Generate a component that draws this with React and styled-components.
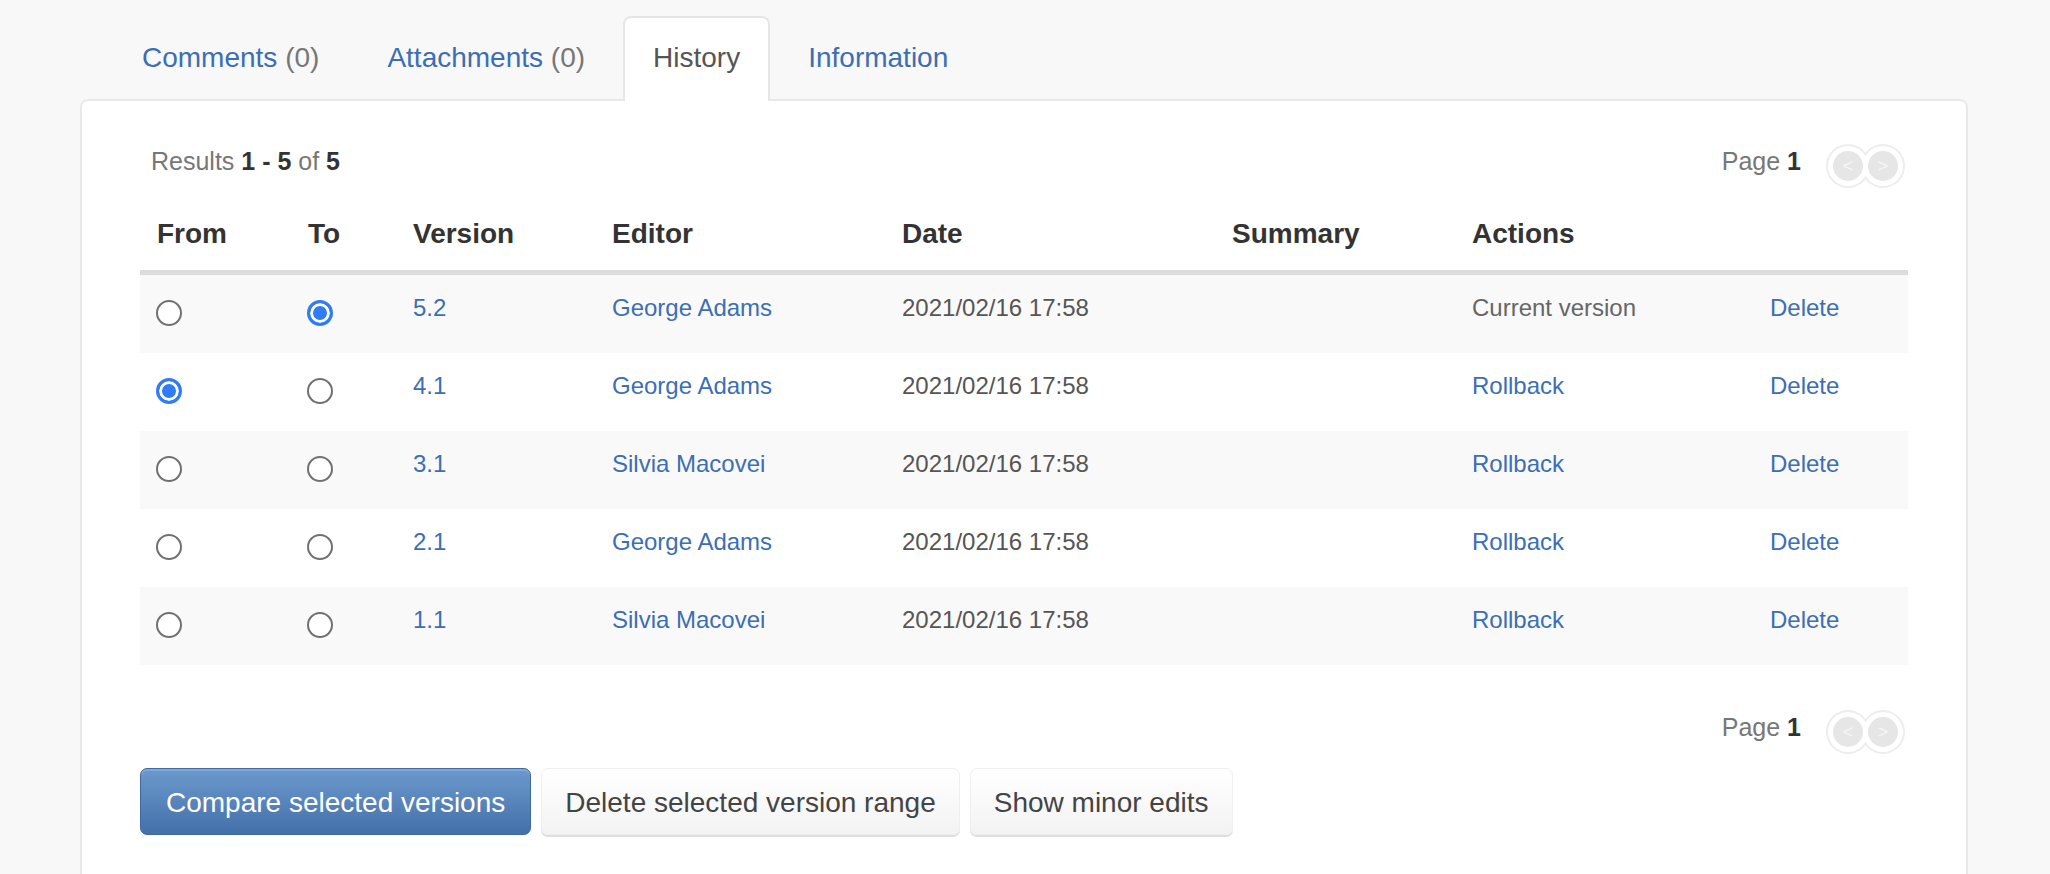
import { useState } from 'react';
import styled, { createGlobalStyle } from 'styled-components';

const GlobalStyle = createGlobalStyle`
  body {
    margin: 0;
    background: #f8f8f8;
    font-family: "Liberation Sans", Arial, sans-serif;
    color: #333;
  }
`;

const Page = styled.div`
  padding: 16px 82px 0 80px;
`;

const TabList = styled.div`
  display: flex;
  gap: 8px;
  padding-left: 32px;
  margin-bottom: -2px;
  position: relative;
  z-index: 1;
`;

const Tab = styled.a`
  display: block;
  padding: 20px 28px 23px;
  border: 2px solid transparent;
  border-bottom: none;
  border-radius: 8px 8px 0 0;
  font-size: 28px;
  line-height: 40px;
  text-decoration: none;
  cursor: pointer;
  color: ${({ active }) => (active ? '#555' : '#3c6eb4')};
  background: ${({ active }) => (active ? '#fff' : 'transparent')};
  border-color: ${({ active }) => (active ? '#e6e6e6' : 'transparent')};
`;

const Count = styled.span`
  color: #777;
`;

const Panel = styled.div`
  background: #fff;
  border: 2px solid #e9e9e9;
  border-bottom: none;
  border-radius: 8px 8px 0 0;
  padding: 42px 58px 60px;
`;

const ResultsBar = styled.div`
  display: flex;
  justify-content: space-between;
  align-items: flex-start;
  padding: 0 10px 0 11px;
  font-size: 25px;
  line-height: 36px;
  color: #777;

  b {
    color: #333;
  }
`;

const PageInfo = styled.div`
  display: flex;
  align-items: flex-start;
`;

const Pager = styled.div`
  display: flex;
  gap: 5px;
  margin: 8px 0 0 32px;
  position: relative;
  z-index: 0;
`;

const PagerButton = styled.button`
  position: relative;
  width: 30px;
  height: 30px;
  padding: 0;
  border: none;
  border-radius: 50%;
  background: #e6e6e6;
  color: #f7f7f7;
  font: 18px/30px "Liberation Sans", Arial, sans-serif;

  &::before,
  &::after {
    content: '';
    position: absolute;
    border-radius: 50%;
  }

  &::before {
    inset: -7px;
    background: #ededed;
    z-index: -2;
  }

  &::after {
    inset: -5px;
    background: #fff;
    z-index: -1;
  }
`;

const Table = styled.table`
  width: 100%;
  margin-top: 17px;
  border-collapse: separate;
  border-spacing: 0;
  table-layout: fixed;
`;

const Th = styled.th`
  padding: 16px 17px;
  border-bottom: 5px solid #dcdcdc;
  font-size: 28px;
  line-height: 40px;
  font-weight: bold;
  text-align: left;
  color: #333;
`;

const Row = styled.tr`
  background: ${({ striped }) => (striped ? '#f9f9f9' : '#fff')};

  & + & td {
    border-top: 2px solid #dddddd;
  }
`;

const Td = styled.td`
  padding: 16px 17px 27px;
  vertical-align: top;
  font-size: 24px;
  line-height: 34px;
  color: ${({ muted }) => (muted ? '#666' : '#555')};
`;

const Radio = styled.input`
  appearance: none;
  display: block;
  width: 26px;
  height: 26px;
  margin: 9px 0 0 -1px;
  border: 2px solid #707070;
  border-radius: 50%;
  background: #fff;
  cursor: pointer;

  &:checked {
    border: 3px solid #2f7cf6;
    background: #2f7cf6;
    box-shadow: inset 0 0 0 3px #fff;
  }
`;

const Link = styled.a`
  color: #3c6eb4;
  text-decoration: none;
  cursor: pointer;
`;

const BottomBar = styled(ResultsBar)`
  justify-content: flex-end;
  margin-top: 44px;
`;

const Buttons = styled.div`
  display: flex;
  gap: 10px;
  margin-top: 21px;
`;

const Button = styled.button`
  padding: 14px ${({ primary }) => (primary ? 25 : 23)}px 11px;
  border: 1px solid ${({ primary }) => (primary ? '#3e69a3' : '#efefef')};
  border-radius: 7px;
  font-family: "Liberation Sans", Arial, sans-serif;
  font-size: 28px;
  line-height: 40px;
  cursor: pointer;
  color: ${({ primary }) => (primary ? '#fff' : '#444')};
  background: ${({ primary }) => (primary
    ? 'linear-gradient(#6c99cc, #4470aa)'
    : 'linear-gradient(#fff, #f3f3f3)')};
  box-shadow: ${({ primary }) => (primary
    ? 'inset 0 2px 0 rgba(255,255,255,0.15)'
    : '0 2px 0 #dedede')};
`;

const columns = [
  { label: 'From', width: 151 },
  { label: 'To', width: 105 },
  { label: 'Version', width: 199 },
  { label: 'Editor', width: 290 },
  { label: 'Date', width: 330 },
  { label: 'Summary', width: 240 },
  { label: 'Actions', width: 298 },
  { label: '', width: 155 },
];

const versions = [
  { version: '5.2', editor: 'George Adams', current: true },
  { version: '4.1', editor: 'George Adams' },
  { version: '3.1', editor: 'Silvia Macovei' },
  { version: '2.1', editor: 'George Adams' },
  { version: '1.1', editor: 'Silvia Macovei' },
];

const tabs = [
  { label: 'Comments', count: 0 },
  { label: 'Attachments', count: 0 },
  { label: 'History' },
  { label: 'Information' },
];

function PageNav() {
  return (
    <PageInfo>
      <span>
        Page <b>1</b>
      </span>
      <Pager>
        <PagerButton type="button">&lt;</PagerButton>
        <PagerButton type="button">&gt;</PagerButton>
      </Pager>
    </PageInfo>
  );
}

export default function App() {
  const [activeTab, setActiveTab] = useState('History');
  const [from, setFrom] = useState('4.1');
  const [to, setTo] = useState('5.2');

  return (
    <Page>
      <GlobalStyle />
      <TabList>
        {tabs.map((tab) => (
          <Tab
            key={tab.label}
            active={activeTab === tab.label}
            onClick={() => setActiveTab(tab.label)}
          >
            {tab.label}
            {tab.count !== undefined && (
              <Count> ({tab.count})</Count>
            )}
          </Tab>
        ))}
      </TabList>
      <Panel>
        <ResultsBar>
          <span>
            Results <b>1 - 5</b> of <b>5</b>
          </span>
          <PageNav />
        </ResultsBar>
        <Table>
          <colgroup>
            {columns.map((col, i) => (
              <col key={i} style={{ width: col.width }} />
            ))}
          </colgroup>
          <thead>
            <tr>
              {columns.map((col, i) => (
                <Th key={i}>{col.label}</Th>
              ))}
            </tr>
          </thead>
          <tbody>
            {versions.map((item, index) => (
              <Row key={item.version} striped={index % 2 === 0}>
                <Td>
                  <Radio
                    type="radio"
                    name="from"
                    checked={from === item.version}
                    onChange={() => setFrom(item.version)}
                  />
                </Td>
                <Td>
                  <Radio
                    type="radio"
                    name="to"
                    checked={to === item.version}
                    onChange={() => setTo(item.version)}
                  />
                </Td>
                <Td><Link>{item.version}</Link></Td>
                <Td><Link>{item.editor}</Link></Td>
                <Td>2021/02/16 17:58</Td>
                <Td />
                <Td muted>
                  {item.current ? 'Current version' : <Link>Rollback</Link>}
                </Td>
                <Td><Link>Delete</Link></Td>
              </Row>
            ))}
          </tbody>
        </Table>
        <BottomBar>
          <PageNav />
        </BottomBar>
        <Buttons>
          <Button type="button" primary>Compare selected versions</Button>
          <Button type="button">Delete selected version range</Button>
          <Button type="button">Show minor edits</Button>
        </Buttons>
      </Panel>
    </Page>
  );
}
